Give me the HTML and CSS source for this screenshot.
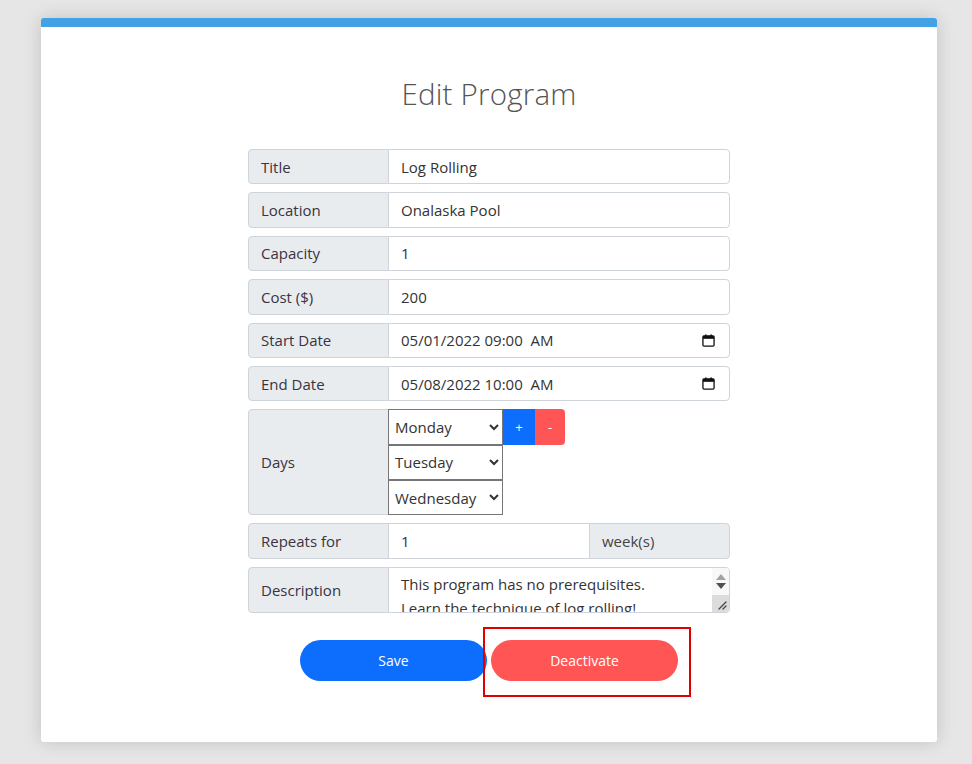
FILE: index.html
```html
<!DOCTYPE html>
<html lang="en">
<head>
<meta charset="utf-8">
<title>Edit Program</title>
<link rel="stylesheet" href="styles.css">
</head>
<body>
<div class="card">
  <h1 class="heading">Edit Program</h1>
  <form class="form">
    <div class="row">
      <span class="label">Title</span>
      <input class="field" type="text" value="Log Rolling">
    </div>
    <div class="row">
      <span class="label">Location</span>
      <input class="field" type="text" value="Onalaska Pool">
    </div>
    <div class="row">
      <span class="label">Capacity</span>
      <input class="field" type="text" value="1">
    </div>
    <div class="row">
      <span class="label">Cost ($)</span>
      <input class="field" type="text" value="200">
    </div>
    <div class="row">
      <span class="label">Start Date</span>
      <div class="field date">
        <span>05/01/2022 09:00&nbsp;&nbsp;AM</span>
        <svg class="cal" viewBox="0 0 14 14" width="13" height="13"><rect x="1" y="2" width="12" height="11" rx="1.2" fill="none" stroke="#111" stroke-width="1.4"/><rect x="1" y="2" width="12" height="3.2" fill="#111"/><rect x="3.3" y="0.5" width="1.6" height="2.5" fill="#111"/><rect x="9.1" y="0.5" width="1.6" height="2.5" fill="#111"/></svg>
      </div>
    </div>
    <div class="row">
      <span class="label">End Date</span>
      <div class="field date">
        <span>05/08/2022 10:00&nbsp;&nbsp;AM</span>
        <svg class="cal" viewBox="0 0 14 14" width="13" height="13"><rect x="1" y="2" width="12" height="11" rx="1.2" fill="none" stroke="#111" stroke-width="1.4"/><rect x="1" y="2" width="12" height="3.2" fill="#111"/><rect x="3.3" y="0.5" width="1.6" height="2.5" fill="#111"/><rect x="9.1" y="0.5" width="1.6" height="2.5" fill="#111"/></svg>
      </div>
    </div>
    <div class="row days-row">
      <span class="label">Days</span>
      <div class="days">
        <div class="day-line">
          <select class="day"><option>Monday</option><option>Tuesday</option><option>Wednesday</option></select>
          <button type="button" class="mini plus">+</button>
          <button type="button" class="mini minus">-</button>
        </div>
        <div class="day-line">
          <select class="day"><option>Tuesday</option></select>
        </div>
        <div class="day-line">
          <select class="day"><option>Wednesday</option></select>
        </div>
      </div>
    </div>
    <div class="row">
      <span class="label">Repeats for</span>
      <input class="field mid" type="text" value="1">
      <span class="label addon">week(s)</span>
    </div>
    <div class="row desc-row">
      <span class="label">Description</span>
      <div class="field area-wrap">
        <textarea class="area">This program has no prerequisites.
Learn the technique of log rolling!
Bring a swimsuit and a towel.</textarea>
        <div class="sb">
          <div class="sb-arrows">
            <svg width="10" height="6" viewBox="0 0 10 6"><path d="M0 6 L5 0 L10 6 Z" fill="#a3a3a3"/></svg>
            <svg width="10" height="6" viewBox="0 0 10 6"><path d="M0 0 L5 6 L10 0 Z" fill="#505050"/></svg>
          </div>
          <div class="sb-corner">
            <svg width="10" height="10" viewBox="0 0 10 10"><path d="M2 9 L9 2 M6 9 L9 6" stroke="#444" stroke-width="1.3" stroke-linecap="round"/></svg>
          </div>
        </div>
      </div>
    </div>
    <div class="actions">
      <button type="button" class="btn save">Save</button>
      <span class="mark-wrap">
        <button type="button" class="btn deact">Deactivate</button>
        <span class="mark"></span>
      </span>
    </div>
  </form>
</div>
</body>
</html>
```

FILE: styles.css
```css
html, body {
  margin: 0;
  padding: 0;
}
body {
  background: #e6e6e6;
  font-family: "Open Sans", "Liberation Sans", sans-serif;
  height: 764px;
  overflow: hidden;
}
.card {
  box-sizing: border-box;
  margin: 18px 0 0 41px;
  width: 896px;
  height: 724px;
  background: #fff;
  border-top: 9px solid #42a2e5;
  border-radius: 3px;
  box-shadow: 0 0 18px rgba(0, 0, 0, 0.16);
  padding-top: 49px;
}
.heading {
  margin: 0 0 37px;
  text-align: center;
  font-size: 29.5px;
  font-weight: 300;
  color: #555;
  line-height: 36px;
  letter-spacing: 0.2px;
}
.form {
  width: 482px;
  margin: 0 auto;
}
.row {
  display: flex;
  height: 35.4px;
  margin-bottom: 8px;
  font-size: 15px;
  color: #333;
}
.label {
  box-sizing: border-box;
  width: 141px;
  flex: none;
  display: flex;
  align-items: center;
  padding: 0 12px;
  background: #e9ecef;
  border: 1px solid #ced4da;
  border-radius: 4px 0 0 4px;
  color: #3a3340;
}
.field {
  box-sizing: border-box;
  flex: 1;
  min-width: 0;
  height: 100%;
  margin: 0;
  margin-left: -1px;
  padding: 0 12px;
  border: 1px solid #ced4da;
  border-radius: 0 4px 4px 0;
  background: #fff;
  font-family: inherit;
  font-size: 15px;
  color: #333;
  outline: none;
}
.date {
  display: flex;
  align-items: center;
  justify-content: space-between;
  padding-right: 14px;
}
.cal {
  display: block;
}
.mid {
  flex: 1;
  border-radius: 0;
}
.addon {
  margin-left: -1px;
  width: 141px;
  border-radius: 0 4px 4px 0;
  color: #444;
}
.days-row {
  height: 106px;
}
.days {
  display: flex;
  flex-direction: column;
  margin-left: -1px;
}
.day-line {
  display: flex;
  height: 35.33px;
}
.day {
  box-sizing: border-box;
  width: 115px;
  height: 100%;
  margin: 0;
  border: 1px solid #767676;
  border-radius: 0;
  background: #fff;
  font-family: inherit;
  font-size: 15px;
  color: #333;
  padding: 0 0 0 2px;
}
.mini {
  box-sizing: border-box;
  height: 100%;
  border: none;
  margin: 0;
  padding: 0;
  color: #fff;
  font-family: inherit;
  font-size: 13px;
  cursor: pointer;
}
.plus {
  width: 32px;
  background: #0d6efd;
}
.minus {
  width: 30px;
  background: #ff5555;
  border-radius: 0 4px 4px 0;
}
.desc-row {
  height: 46px;
}
.area-wrap {
  display: flex;
  padding: 0;
  overflow: hidden;
}
.area {
  flex: 1;
  min-width: 0;
  height: 100%;
  box-sizing: border-box;
  margin: 0;
  border: none;
  resize: none;
  outline: none;
  overflow: hidden;
  padding: 4px 12px 0;
  line-height: 24px;
  font-family: inherit;
  font-size: 15px;
  color: #333;
  background: transparent;
}
.sb {
  width: 17px;
  flex: none;
  display: flex;
  flex-direction: column;
  background: #f1f1f1;
}
.sb-arrows {
  height: 27px;
  display: flex;
  flex-direction: column;
  align-items: center;
  justify-content: center;
  gap: 3px;
  background: #f8f8f8;
}
.sb-arrows svg,
.sb-corner svg {
  display: block;
}
.sb-corner {
  flex: 1;
  background: #dcdcdc;
  display: flex;
  align-items: flex-end;
  justify-content: flex-end;
  padding: 0 2px 2px 0;
}
.actions {
  display: flex;
  justify-content: center;
  gap: 4px;
  margin-top: 27px;
}
.btn {
  width: 187px;
  height: 41px;
  border: none;
  border-radius: 21px;
  color: #fff;
  font-family: "Open Sans", "Liberation Sans", sans-serif;
  font-size: 14px;
  cursor: pointer;
}
.save {
  background: #0d6efd;
}
.deact {
  background: #ff5555;
}
.mark-wrap {
  position: relative;
  display: block;
}
.mark {
  position: absolute;
  left: -8px;
  top: -13px;
  width: 208px;
  height: 70px;
  box-sizing: border-box;
  border: 2px solid #e00000;
  pointer-events: none;
}
```
